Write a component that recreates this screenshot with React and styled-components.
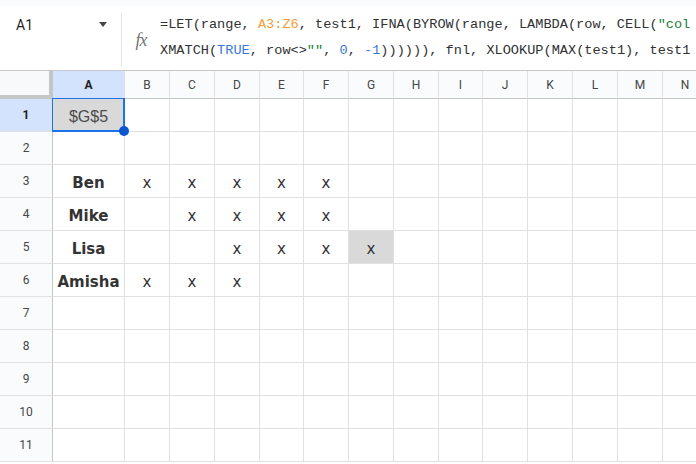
import React from 'react';
import styled, { createGlobalStyle } from 'styled-components';

const GlobalStyle = createGlobalStyle`
  html, body {
    margin: 0;
    padding: 0;
    background: #ffffff;
    overflow: hidden;
  }
  body {
    width: 696px;
    height: 464px;
    font-family: Roboto, "Liberation Sans", Arial, sans-serif;
  }
`;

// column widths in px, border included
const COLUMNS = [
  { key: 'A', width: 72 },
  { key: 'B', width: 45 },
  { key: 'C', width: 45 },
  { key: 'D', width: 45 },
  { key: 'E', width: 44 },
  { key: 'F', width: 45 },
  { key: 'G', width: 45 },
  { key: 'H', width: 45 },
  { key: 'I', width: 44 },
  { key: 'J', width: 45 },
  { key: 'K', width: 45 },
  { key: 'L', width: 45 },
  { key: 'M', width: 45 },
  { key: 'N', width: 45 },
];

const DATA = {
  1: { A: '$G$5' },
  3: { A: 'Ben', B: 'x', C: 'x', D: 'x', E: 'x', F: 'x' },
  4: { A: 'Mike', C: 'x', D: 'x', E: 'x', F: 'x' },
  5: { A: 'Lisa', D: 'x', E: 'x', F: 'x', G: 'x' },
  6: { A: 'Amisha', B: 'x', C: 'x', D: 'x' },
};

const FILLED = ['A1', 'G5'];
const ROWS = Array.from({ length: 11 }, (_, i) => i + 1);

const Page = styled.div`
  display: flex;
  flex-direction: column;
  width: 696px;
  height: 464px;
  overflow: hidden;
`;

const TopStrip = styled.div`
  flex-shrink: 0;
  height: 6px;
  background: #f9fbfd;
`;

const FormulaBar = styled.div`
  flex-shrink: 0;
  display: flex;
  height: 65px;
  box-sizing: border-box;
  border-bottom: 1px solid #c7c7c7;
  background: #ffffff;
`;

const NameBox = styled.div`
  display: flex;
  align-items: center;
  justify-content: space-between;
  width: 121px;
  height: 26px;
  margin-top: 6px;
  padding: 0 14px 0 16px;
  box-sizing: border-box;
  font-size: 14px;
  color: #1f1f1f;
`;

const Caret = styled.span`
  width: 0;
  height: 0;
  border-left: 4px solid transparent;
  border-right: 4px solid transparent;
  border-top: 5px solid #444746;
  margin-top: -2px;
`;

const Divider = styled.div`
  width: 1px;
  margin: 8px 0 4px;
  background: #e3e3e3;
`;

const FxIcon = styled.div`
  display: flex;
  align-items: center;
  justify-content: center;
  width: 38px;
  padding-top: 4px;
  font-family: "Liberation Serif", serif;
  font-style: italic;
  font-size: 18px;
  color: #757575;
  letter-spacing: -1px;
`;

const FormulaText = styled.div`
  flex: 1;
  padding-top: 6px;
  overflow: hidden;
  white-space: pre;
  font-family: "Liberation Mono", "DejaVu Sans Mono", monospace;
  font-size: 13.6px;
  line-height: 26px;
  color: #303134;
`;

const Tok = styled.span`
  color: ${(p) => ({ range: '#f29d38', bool: '#3b78d8', str: '#188038' }[p.$kind] || '#303134')};
`;

const Grid = styled.div`
  flex-shrink: 0;
  display: grid;
  grid-template-columns: ${(p) => p.$columns};
  grid-template-rows: 28px;
  grid-auto-rows: 33px;
`;

const Corner = styled.div`
  box-sizing: border-box;
  background: #f8f9fa;
  border-right: 4px solid #c4c7c5;
  border-bottom: 4px solid #c4c7c5;
`;

const ColHeader = styled.div`
  display: flex;
  align-items: center;
  justify-content: center;
  box-sizing: border-box;
  border-right: 1px solid #e1e1e1;
  border-bottom: 1px solid #c4c7c5;
  background: ${(p) => (p.$active ? '#d3e3fd' : '#f9fbfd')};
  font-size: 12px;
  font-weight: ${(p) => (p.$active ? 700 : 400)};
  color: ${(p) => (p.$active ? '#1f1f1f' : '#444746')};
`;

const RowHeader = styled.div`
  display: flex;
  align-items: center;
  justify-content: center;
  box-sizing: border-box;
  border-right: 1px solid #c4c7c5;
  border-bottom: 1px solid #e1e1e1;
  background: ${(p) => (p.$active ? '#d3e3fd' : '#f9fbfd')};
  font-size: 12px;
  font-weight: ${(p) => (p.$active ? 700 : 400)};
  color: ${(p) => (p.$active ? '#1f1f1f' : '#444746')};
`;

const Cell = styled.div`
  position: relative;
  z-index: ${(p) => (p.$active ? 2 : 'auto')};
  display: flex;
  align-items: center;
  justify-content: center;
  box-sizing: border-box;
  padding-top: 3px;
  border-right: 1px solid #e1e1e1;
  border-bottom: 1px solid #e1e1e1;
  background: ${(p) => (p.$filled ? '#d9d9d9' : '#ffffff')};
  font-family: "DejaVu Sans", Verdana, sans-serif;
  font-size: 15px;
  font-weight: ${(p) => (p.$bold ? 700 : 400)};
  color: #333333;
  white-space: nowrap;
`;

const RefText = styled.span`
  font-family: "Liberation Sans", Arial, sans-serif;
  font-size: 16px;
  color: #4a4a4a;
`;

// selection frame on the active cell
const Selection = styled.div`
  position: absolute;
  left: -1px;
  top: -1px;
  right: -1px;
  bottom: -1px;
  border: 2px solid #1a73e8;
  border-left-width: 1px;
  border-top-width: 1px;
  pointer-events: none;
`;

const Handle = styled.div`
  position: absolute;
  right: -6px;
  bottom: -6px;
  width: 10px;
  height: 10px;
  border-radius: 50%;
  background: #0b57d0;
`;

const App = () => {
  const columns = ['53px', ...COLUMNS.map((c) => `${c.width}px`)].join(' ');

  return (
    <>
      <GlobalStyle />
      <Page>
        <TopStrip />
        <FormulaBar>
          <NameBox>
            A1
            <Caret />
          </NameBox>
          <Divider />
          <FxIcon>fx</FxIcon>
          <FormulaText>
            {'=LET(range, '}
            <Tok $kind="range">A3:Z6</Tok>
            {', test1, IFNA(BYROW(range, LAMBDA(row, CELL('}
            <Tok $kind="str">"col</Tok>
            {'\n'}
            {'XMATCH('}
            <Tok $kind="bool">TRUE</Tok>
            {', row<>'}
            <Tok $kind="str">""</Tok>
            {', '}
            <Tok $kind="bool">0</Tok>
            {', '}
            <Tok $kind="bool">-1</Tok>
            {')))))), fnl, XLOOKUP(MAX(test1), test1'}
          </FormulaText>
        </FormulaBar>

        <Grid $columns={columns}>
          <Corner />
          {COLUMNS.map((c) => (
            <ColHeader key={c.key} $active={c.key === 'A'}>
              {c.key}
            </ColHeader>
          ))}

          {ROWS.map((r) => (
            <React.Fragment key={r}>
              <RowHeader $active={r === 1}>{r}</RowHeader>
              {COLUMNS.map((c) => {
                const id = `${c.key}${r}`;
                const value = DATA[r] && DATA[r][c.key];
                const isRef = id === 'A1';
                return (
                  <Cell
                    key={id}
                    $active={isRef}
                    $filled={FILLED.includes(id)}
                    $bold={c.key === 'A' && !isRef}
                  >
                    {isRef ? <RefText>{value}</RefText> : value}
                    {isRef && (
                      <Selection>
                        <Handle />
                      </Selection>
                    )}
                  </Cell>
                );
              })}
            </React.Fragment>
          ))}
        </Grid>
      </Page>
    </>
  );
};

export default App;
